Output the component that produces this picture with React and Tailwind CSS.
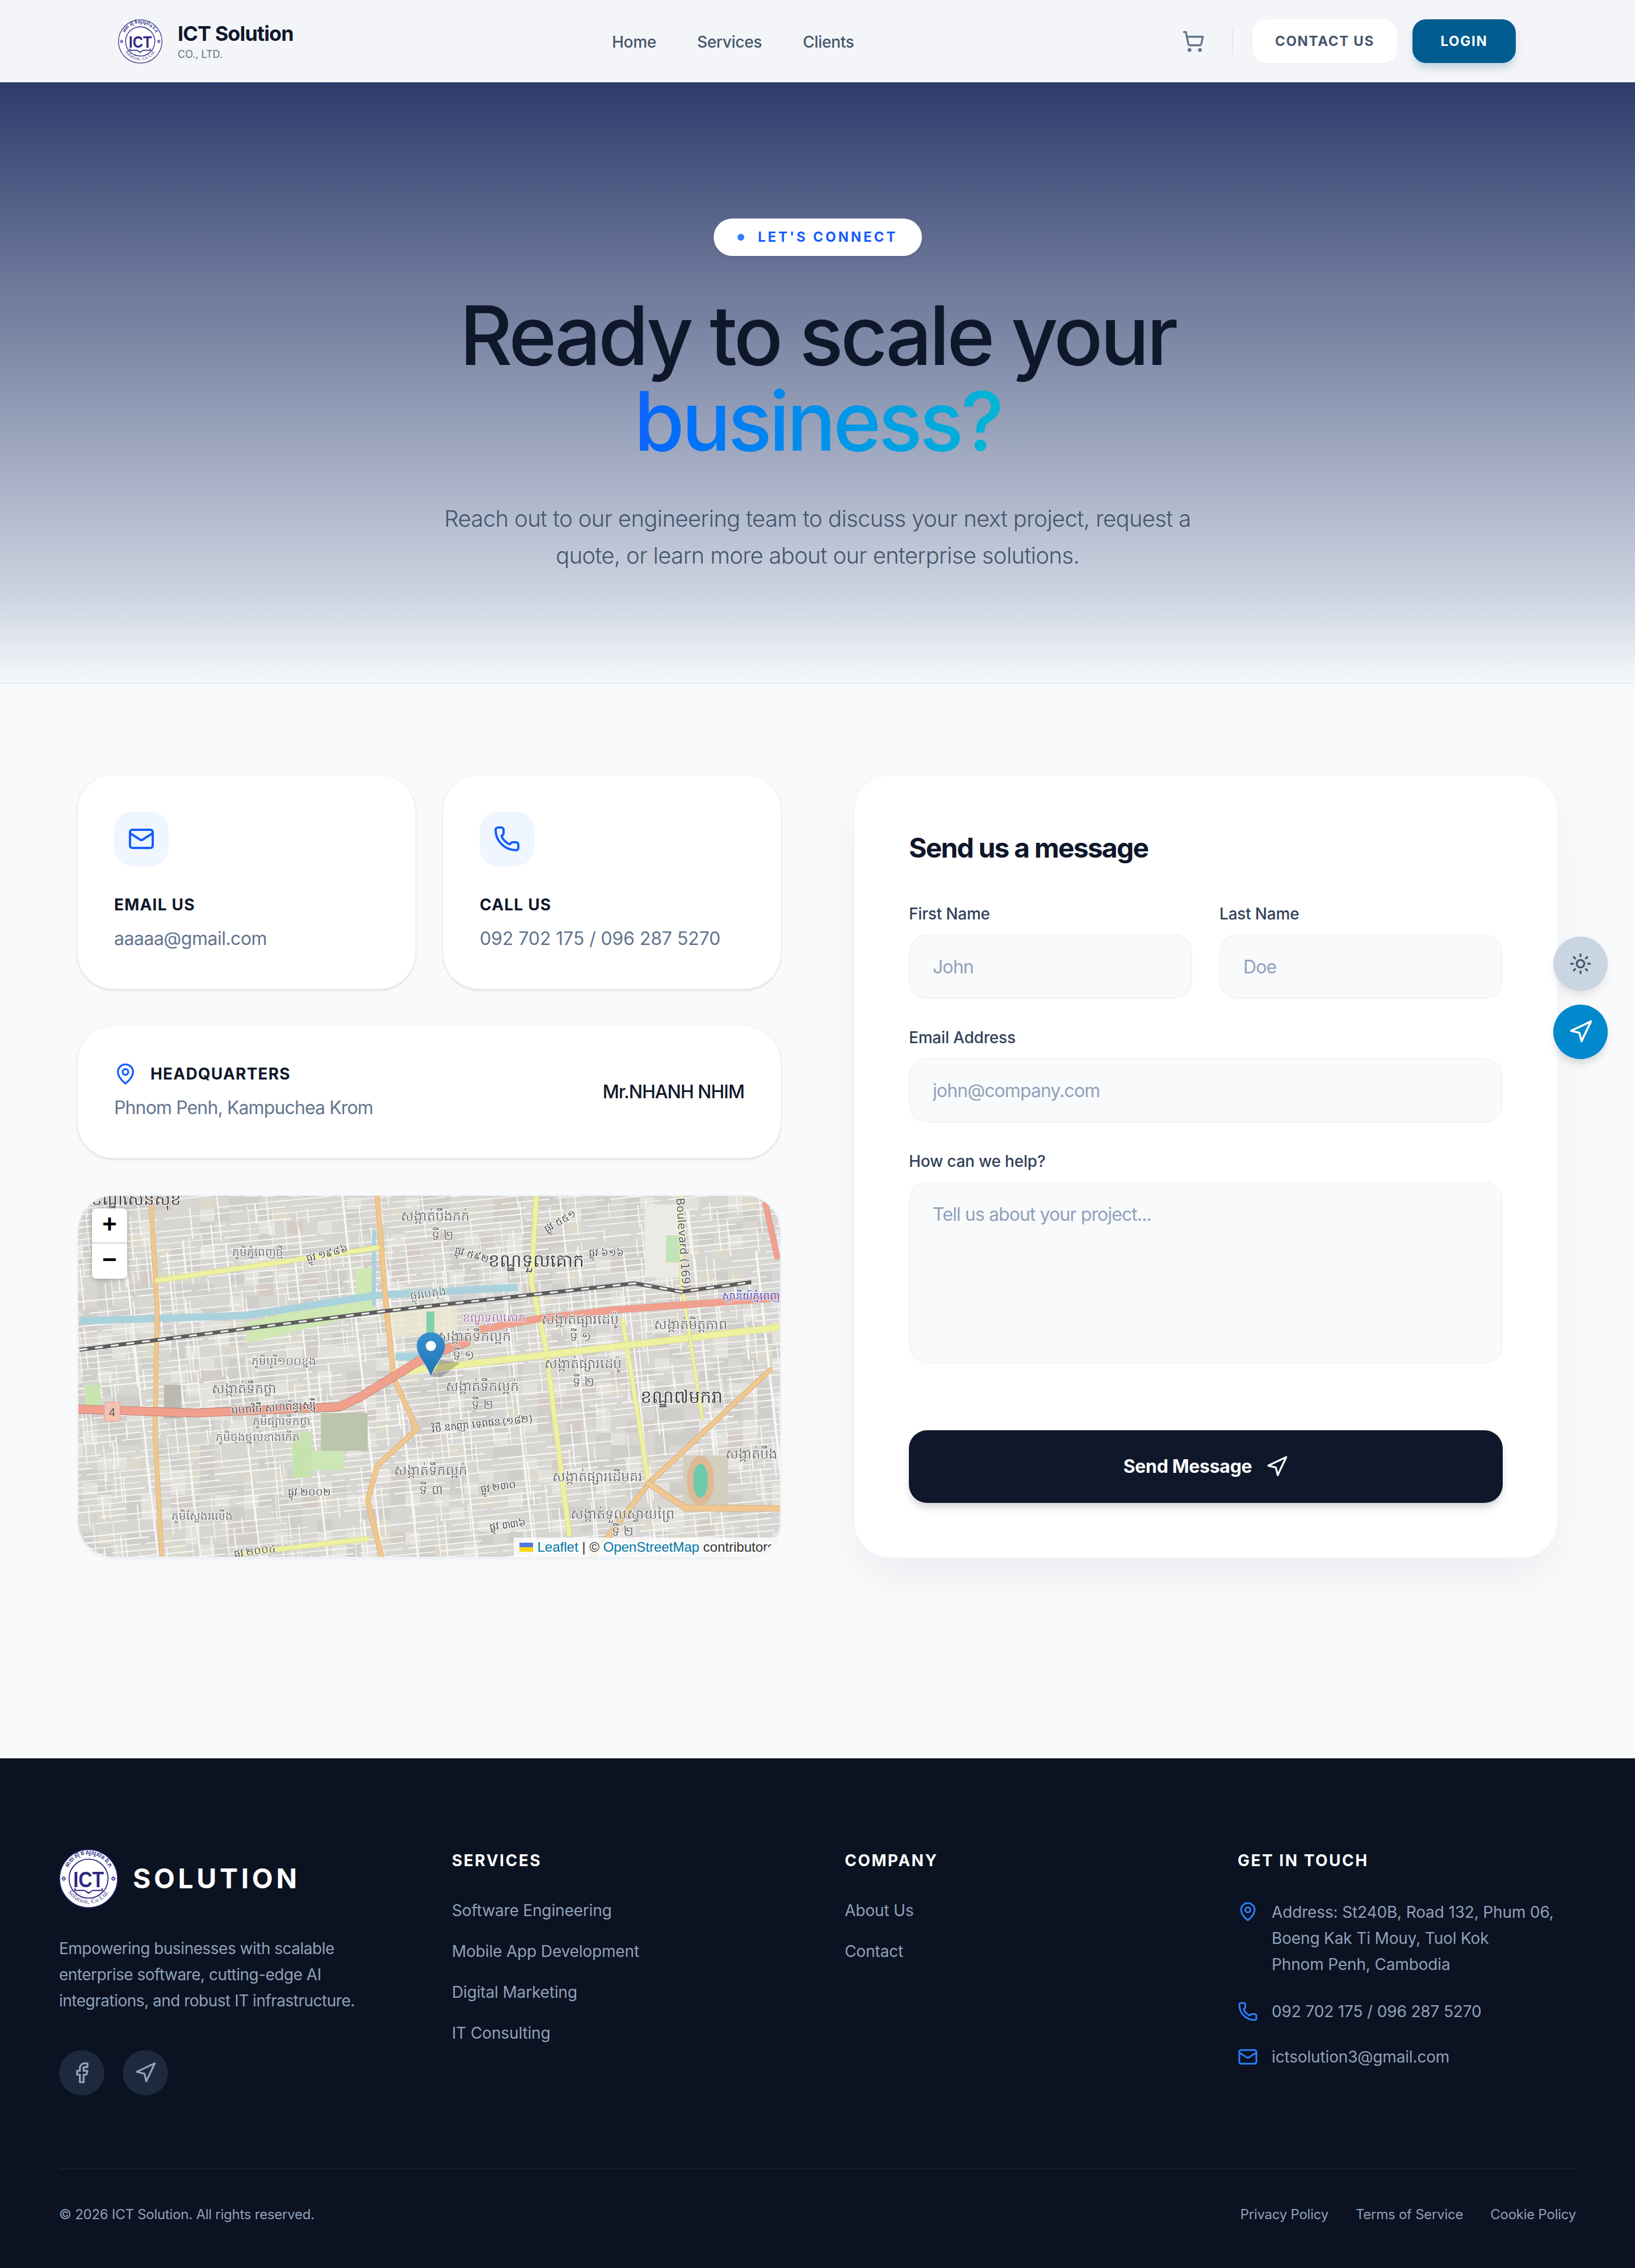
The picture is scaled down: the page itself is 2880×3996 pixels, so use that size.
import React from 'react';
import { Mail, Phone, MapPin, Navigation, Sun, ShoppingCart, Facebook } from 'lucide-react';

const FONT = "font-['Inter','Liberation_Sans',sans-serif]";
const KHMER = "'Noto Sans','DejaVu Sans',sans-serif";

const Logo = ({ className }) => (
  <svg viewBox="0 0 100 100" className={className}>
    <defs>
      <path id="arcTop" d="M13 52 A37.5 37.5 0 1 1 87 52" />
      <path id="arcBottom" d="M10 58 A40.5 40.5 0 0 0 90 58" />
    </defs>
    <circle cx="50" cy="50" r="49" fill="#fff" stroke="#2e2a80" strokeWidth="1.6" />
    <circle cx="50" cy="50" r="33" fill="#fff" stroke="#2e2a80" strokeWidth="1.8" />
    <text fontFamily={KHMER} fontSize="9" fill="#2e2a80" fontWeight="700">
      <textPath href="#arcTop" startOffset="50%" textAnchor="middle">អាយ ស៊ី ធី សូលូសិន ឯ.ក</textPath>
    </text>
    <text fontFamily="'Liberation Serif',serif" fontSize="10.5" fill="#2e2a80" letterSpacing="0.6">
      <textPath href="#arcBottom" startOffset="50%" textAnchor="middle">Solution, Co Ltd.</textPath>
    </text>
    <text x="24" y="64" textLength="52" lengthAdjust="spacingAndGlyphs" fontFamily="'Liberation Sans',sans-serif" fontSize="38" fontWeight="700" fill="#2e2a80">ICT</text>
    <path d="M26 66v5h17l7 5 7-5h17v-5h-2v3H57l-7 4-7-4H28v-3z" fill="#2e2a80" />
    <path d="M5 50l3-3 3 3-3 3zM89 50l3-3 3 3-3 3z" fill="none" stroke="#2e2a80" strokeWidth="1.5" />
  </svg>
);

// tiny seeded generator so the street map stays the same between renders
const rng = (seed) => () => {
  seed = (seed * 16807) % 2147483647;
  return seed / 2147483647;
};

const blocks = (() => {
  const r = rng(77);
  const out = [];
  for (let x = -20; x < 1260; x += 26) {
    for (let y = -20; y < 660; y += 22) {
      const v = r();
      const fill = v < 0.55 ? '#d8d6d2' : v < 0.78 ? '#d0cecb' : v < 0.92 ? '#e4e2dd' : v < 0.97 ? '#dbdacc' : '#d5ccc6';
      out.push({ x, y, fill });
    }
  }
  return out;
})();

const streets = (() => {
  const r = rng(4242);
  const out = [];
  // dense cross streets running slightly uphill
  for (let y = -120; y < 800; y += 11) {
    let x = -60;
    while (x < 1320) {
      const len = 40 + r() * 170;
      if (r() > 0.18) out.push({ x1: x, y1: y + x * -0.1, x2: x + len, y2: y + (x + len) * -0.1, w: 1.3 + r() * 1.2 });
      x += len + 10;
    }
  }
  // short side streets going the other way
  for (let i = 0; i < 420; i++) {
    const x = r() * 1260 - 10;
    const y = r() * 660 - 10;
    const len = 20 + r() * 70;
    out.push({ x1: x, y1: y, x2: x + len * 0.1, y2: y + len, w: 1.2 + r() * 1.2 });
  }
  // a few longer ones
  for (let x = -40; x < 1340; x += 70 + r() * 60) {
    const top = -20 + r() * 300;
    out.push({ x1: x, y1: top, x2: x + (660 - top) * 0.11, y2: 660, w: 2.6 + r() * 1.6 });
  }
  return out;
})();

const Road = ({ d, color, casing, w }) => (
  <g fill="none" strokeLinejoin="round" strokeLinecap="round">
    <path d={d} stroke={casing} strokeWidth={w + 1.6} />
    <path d={d} stroke={color} strokeWidth={w} />
  </g>
);

// [x, y, text, size, rotation, colour]
const labels = [
  [101, 16, 'ខណ្ឌសែនសុខ', 30, 0, '#454545'],
  [631, 44, 'សង្កាត់បឹងកក់', 24, 0],
  [644, 78, 'ទី ២', 24, 0],
  [810, 126, 'ខណ្ឌទួលគោក', 32, 0, '#454545'],
  [316, 107, 'ភូមិភ្នំពេញថ្មី', 20, 0],
  [619, 180, 'ផ្លូវបេតុង', 20, -8],
  [735, 223, 'ខណ្ឌទួលគោក', 21, 0, '#a272a4'],
  [888, 227, 'សង្កាត់ផ្សារដេប៉ូ', 24, 0],
  [888, 258, 'ទី ១', 24, 0],
  [1083, 236, 'សង្កាត់មិត្តភាព', 24, 0],
  [700, 258, 'សង្កាត់ទឹកល្អក់', 24, 0],
  [681, 291, 'ទី ១', 24, 0],
  [893, 306, 'សង្កាត់ផ្សារដេប៉ូ', 24, 0],
  [893, 338, 'ទី ២', 24, 0],
  [714, 346, 'សង្កាត់ទឹកល្អក់', 24, 0],
  [714, 378, 'ទី ២', 24, 0],
  [1067, 367, 'ខណ្ឌ៧មករា', 32, 0, '#454545'],
  [292, 350, 'សង្កាត់ទឹកថ្លា', 24, 0],
  [362, 300, 'ភូមិបូរី១០០ខ្នង', 20, 0],
  [358, 407, 'ភូមិផ្សារទឹកថ្លា', 20, 0],
  [316, 435, 'ភូមិចុងថ្នល់ខាងកើត', 20, 0],
  [345, 382, 'មហាវិថី សហព័ន្ធរុស្ស៊ី', 19, -4, '#454545'],
  [714, 410, 'វិថី ឧកញ៉ា ទេពផន (១៨២)', 18, -6, '#454545'],
  [623, 495, 'សង្កាត់ទឹកល្អក់', 24, 0],
  [623, 529, 'ទី ៣', 24, 0],
  [918, 506, 'សង្កាត់ផ្សារដើមគរ', 24, 0],
  [963, 573, 'សង្កាត់ទួលស្វាយព្រៃ', 24, 0],
  [963, 603, 'ទី ២', 24, 0],
  [1191, 466, 'សង្កាត់បឹង', 24, 0],
  [217, 575, 'ភូមិស្លែងរលើង', 20, 0],
  [1191, 184, 'ស្ថានីយ៍ភ្នំពេញ', 19, 0, '#4646b4'],
  [408, 531, 'ផ្លូវ ២០០២', 18, 0, '#454545'],
  [743, 522, 'ផ្លូវ ២៣០', 18, -8, '#454545'],
  [760, 589, 'ផ្លូវ ៣៣៦', 18, -8, '#454545'],
  [312, 636, 'ផ្លូវ ២០០៤', 18, -8, '#454545'],
  [934, 107, 'ផ្លូវ ៦១៦', 18, 0, '#454545'],
  [694, 110, 'ផ្លូវ ៥៩២', 18, 15, '#454545'],
  [855, 50, 'ផ្លូវ ៥៥១', 18, -30, '#454545'],
  [440, 108, 'ផ្លូវ ១៩៨៦', 18, -14, '#454545'],
];

const MapTiles = () => (
  <svg viewBox="0 0 1240 640" className="block w-full h-full">
    <g style={{ filter: 'blur(0.6px)' }}>
      <rect width="1240" height="640" fill="#d8d6d2" />
      {blocks.map((b, i) => <rect key={i} x={b.x} y={b.y} width="26" height="22" fill={b.fill} />)}
      {streets.map((s, i) => <line key={i} x1={s.x1} y1={s.y1} x2={s.x2} y2={s.y2} stroke="#f8f7f5" strokeWidth={s.w} />)}
      {/* parks and landuse */}
      <path d="M296 225L525 165L525 205L296 262Z" fill="#cfe8b4" />
      <path d="M490 130L525 125L525 190L490 190Z" fill="#cfe8b4" />
      <path d="M428 385H511V452H470V483H428Z" fill="#bcc4ac" />
      <path d="M378 420h34v80h-34z" fill="#c6e3ae" />
      <path d="M412 452h58v35h-58z" fill="#cce6b6" />
      <path d="M1002 15h66v130h-66z" fill="#eceae4" />
      <path d="M1040 70h24v48h-24z" fill="#c3e3b9" />
      <path d="M550 195h120v55h-120z" fill="#ecead0" opacity="0.75" />
      <path d="M615 205h14v38h-14z" fill="#7fd0ab" />
      <path d="M1070 460h80v95h-80z" fill="#d2cfbd" />
      <ellipse cx="1101" cy="505" rx="24" ry="44" fill="#dfb896" />
      <ellipse cx="1101" cy="505" rx="13" ry="30" fill="#6bcbaa" />
      <path d="M150 335h30v60h-30z" fill="#bcbab0" />
      <path d="M10 335h28v50h-28z" fill="#c8e5b0" />
      {/* canal */}
      <path d="M0 222L296 212L528 176L777 162" fill="none" stroke="#a9d2dd" strokeWidth="13" />
      <path d="M522 60V195" fill="none" stroke="#a9d2dd" strokeWidth="7" />
      <path d="M560 292h55v-14h-55z" fill="#a9d2dd" />
      {/* roads */}
      <Road d="M126 0L138 197L134 420L146 640" color="#f0c78e" casing="#dcae74" w={7} />
      <Road d="M528 0L544 197L557 322L598 414L528 478L511 541L536 640" color="#f0c78e" casing="#dcae74" w={8} />
      <Road d="M810 0L801 153L826 264L868 600" color="#eef1a0" casing="#d5d68c" w={8} />
      <Road d="M963 220L1009 510" color="#eef1a0" casing="#d5d68c" w={7} />
      <Road d="M561 313L826 282L1240 233" color="#eef1a0" casing="#d5d68c" w={11} />
      <Road d="M138 150L528 92" color="#eef1a0" casing="#d5d68c" w={8} />
      <Road d="M1067 0L1067 153L1104 394" color="#eef1a0" casing="#d5d68c" w={5} />
      <Road d="M279 635L511 608" color="#eef1a0" casing="#d5d68c" w={8} />
      <Road d="M909 640L1009 510L1224 309" color="#f0c78e" casing="#c9a98a" w={8} />
      <Road d="M1009 510L1075 554L1240 554" color="#f0c78e" casing="#c9a98a" w={10} />
      <Road d="M0 378L204 385L461 374L495 358L561 318L619 282L685 260" color="#f2a08e" casing="#b97464" w={14} />
      <Road d="M710 237L818 217L951 202L1200 184L1240 180" color="#f2a08e" casing="#d8978a" w={11} />
      <Road d="M1216 14L1237 108" color="#f2a08e" casing="#d8978a" w={9} />
      {/* railway */}
      <path d="M0 273L544 204L984 155L1067 170L1191 153" fill="none" stroke="#5c5c5c" strokeWidth="7" />
      <path d="M0 273L544 204L984 155L1067 170L1191 153" fill="none" stroke="#f3f3f3" strokeWidth="3" strokeDasharray="14 14" />
      {/* route shield */}
      <rect x="44" y="366" width="28" height="34" rx="3" fill="#f2c3b4" stroke="#d99f8f" />
      <text x="58" y="390" textAnchor="middle" fontSize="20" fontFamily="'Liberation Sans',sans-serif" fill="#555">4</text>
      <text x="1058" y="4" transform="rotate(86 1058 4)" fontSize="20" fontFamily="'DejaVu Sans',sans-serif" fill="#555" stroke="#fff" strokeWidth="2" paintOrder="stroke">Boulevard (169)</text>
      {labels.map(([x, y, t, s, rot, c], i) => (
        <text key={i} x={x} y={y} textAnchor="middle" fontSize={s} transform={rot ? `rotate(${rot} ${x} ${y})` : undefined} fontFamily={KHMER} fill={c || '#6e6e6e'} stroke="#fff" strokeWidth="2" paintOrder="stroke">{t}</text>
      ))}
    </g>
    {/* leaflet marker */}
    <defs>
      <linearGradient id="pinFill" x1="0" y1="0" x2="0" y2="1">
        <stop offset="0" stopColor="#3a8fd0" />
        <stop offset="1" stopColor="#1f74b5" />
      </linearGradient>
    </defs>
    <path d="M623 320L640 290L675 296L640 322Z" fill="#000" opacity="0.2" />
    <path d="M623 319C614 296 598 282 598 266C598 252 609 242 623 242C637 242 648 252 648 266C648 282 632 296 623 319Z" fill="url(#pinFill)" />
    <circle cx="623" cy="266" r="9" fill="#fff" />
  </svg>
);

const InfoCard = ({ icon: Icon, title, value, valueClass }) => (
  <div className="bg-white rounded-[64px] border border-slate-100 p-16 shadow-[0_2px_4px_rgba(15,23,42,0.12)]">
    <div className="w-24 h-24 rounded-[32px] bg-blue-50 flex items-center justify-center mb-12">
      <Icon size={48} strokeWidth={2} className="text-blue-600" />
    </div>
    <h3 className="text-[28px] leading-10 font-bold text-slate-900 tracking-[1.2px] uppercase mb-4">{title}</h3>
    <p className={`text-[32px] leading-12 text-slate-500 ${valueClass}`}>{value}</p>
  </div>
);

const Field = ({ label, placeholder, className }) => (
  <div className={className}>
    <label className="block text-[28px] leading-10 font-medium text-slate-700 tracking-[-0.2px] mb-4">{label}</label>
    <input placeholder={placeholder} className="block w-full h-[114px] px-10 rounded-[32px] bg-slate-50 border-2 border-slate-100 text-[32px] tracking-[-0.9px] placeholder:text-slate-400 outline-none" />
  </div>
);

const FooterCol = ({ title, links }) => (
  <div>
    <h4 className="text-[28px] leading-10 font-bold text-white tracking-[2.5px] uppercase mb-12">{title}</h4>
    <ul className="flex flex-col gap-8">
      {links.map(l => <li key={l} className="text-[28px] leading-10 text-slate-400 tracking-[-0.15px]">{l}</li>)}
    </ul>
  </div>
);

export default function App() {
  return (
    <div className={`relative w-full bg-slate-50 ${FONT}`}>
      {/* top nav */}
      <header className="h-[145px] bg-[#f3f5f8] flex items-center justify-between pl-[208px] pr-[210px]">
        <div className="flex items-center gap-[27px]">
          <Logo className="w-[78px] h-[78px]" />
          <div className="flex flex-col pt-0.5">
            <span className="text-[36px] leading-[44px] font-bold text-slate-900 tracking-[-0.9px]">ICT Solution</span>
            <span className="text-[18px] leading-[30px] text-gray-500 uppercase">CO., LTD.</span>
          </div>
        </div>
        <nav className="flex items-center gap-[72px] absolute left-[1078px] top-[54px]">
          <a className="text-[28px] leading-10 font-medium text-slate-600 tracking-[-0.3px]">Home</a>
          <a className="text-[28px] leading-10 font-medium text-slate-600 tracking-[-0.3px]">Services</a>
          <a className="text-[28px] leading-10 font-medium text-slate-600 tracking-[-0.3px]">Clients</a>
        </nav>
        <div className="flex items-center">
          <ShoppingCart size={40} strokeWidth={2} className="text-slate-500" />
          <div className="w-0.5 h-12 bg-slate-200 ml-12 mr-[34px]" />
          <button className="w-[255px] h-[77px] rounded-3xl bg-white text-[24px] font-bold text-slate-600 tracking-[1.7px] uppercase shadow-[0_1px_2px_rgba(0,0,0,0.05)]">Contact Us</button>
          <button className="w-[182px] h-[77px] ml-[27px] rounded-3xl bg-[#025c8f] text-[24px] font-bold text-white tracking-[1.7px] uppercase shadow-[0_10px_15px_-3px_rgba(2,92,143,0.25)]">Login</button>
        </div>
      </header>

      {/* hero */}
      <section className="bg-[linear-gradient(180deg,#2e3a6b_0%,#505d85_18%,#8a94b0_50%,#cbd3e0_85%,#f6f8fb_100%)] pt-60 pb-48 border-b-2 border-[#e9eef4] flex flex-col items-center">
        <div className="h-[66px] w-[367px] justify-center rounded-full bg-white flex items-center gap-6 shadow-[0_2px_4px_rgba(15,23,42,0.1)] mb-16">
          <span className="w-3 h-3 rounded-full bg-blue-500" />
          <span className="text-[24px] font-bold text-blue-600 tracking-[3.95px] uppercase">Let's Connect</span>
        </div>
        <h1 className="text-[144px] leading-[151px] font-medium text-slate-900 tracking-[-5px] text-center">
          Ready to scale your<br />
          <span className="bg-gradient-to-r from-[#0f62fe] to-[#06b6d4] bg-clip-text text-transparent">business?</span>
        </h1>
        <p className="mt-16 w-[1400px] text-[40px] leading-[65px] font-light text-slate-600 tracking-[-0.65px] text-center">
          Reach out to our engineering team to discuss your next project, request a quote, or learn more about our enterprise solutions.
        </p>
      </section>

      {/* contact */}
      <main className="w-[2800px] mx-auto px-24 pt-40 pb-[353px] grid grid-cols-2 gap-32">
        <div className="flex flex-col gap-16">
          <div className="grid grid-cols-2 gap-12">
            <InfoCard icon={Mail} title="Email Us" value="aaaaa@gmail.com" valueClass="tracking-[-0.5px]" />
            <InfoCard icon={Phone} title="Call Us" value="092 702 175 / 096 287 5270" valueClass="tracking-[-0.1px]" />
          </div>
          <div className="bg-white rounded-[64px] border border-slate-100 p-16 flex items-center justify-between shadow-[0_2px_4px_rgba(15,23,42,0.12)]">
            <div>
              <div className="flex items-center gap-6 mb-4">
                <MapPin size={40} strokeWidth={2} className="text-blue-600" />
                <h3 className="text-[28px] leading-10 font-bold text-slate-900 tracking-[1.2px] uppercase">Headquarters</h3>
              </div>
              <p className="text-[32px] leading-12 text-slate-500 tracking-[-0.88px]">Phnom Penh, Kampuchea Krom</p>
            </div>
            <p className="text-[32px] leading-12 font-medium text-slate-900 tracking-[-1px]">Mr.NHANH NHIM</p>
          </div>
          <div className="relative h-[640px] rounded-[64px] overflow-hidden border-2 border-slate-100 shadow-[0_2px_4px_rgba(15,23,42,0.06)]">
            <MapTiles />
            <div className="absolute left-[24px] top-[22px] w-[62px] rounded-lg bg-white shadow-[0_1px_8px_rgba(0,0,0,0.3)] font-['Liberation_Mono',monospace] text-[44px] font-bold text-black text-center">
              <div className="h-[62px] leading-[62px] border-b-2 border-slate-300">+</div>
              <div className="h-[62px] leading-[62px]">−</div>
            </div>
            <div className="absolute right-0 bottom-0 h-[34px] pl-2.5 pr-2.5 bg-white/80 flex items-center gap-2 font-['Liberation_Sans',sans-serif] text-[24px] text-[#333] whitespace-nowrap">
              <svg viewBox="0 0 24 16" className="w-6 h-4"><path d="M0 0h24v8H0z" fill="#4c7be1" /><path d="M0 8h24v8H0z" fill="#ffd500" /></svg>
              <span><span className="text-[#0078a8]">Leaflet</span> | © <span className="text-[#0078a8]">OpenStreetMap</span> contributors</span>
            </div>
          </div>
        </div>

        <div className="bg-white rounded-[64px] border border-slate-100 p-24 h-[1380px] shadow-[0_40px_80px_-10px_rgba(15,23,42,0.06)]">
          <h2 className="text-[48px] leading-16 font-bold text-slate-900 tracking-[-1.8px] mb-16">Send us a message</h2>
          <div className="grid grid-cols-2 gap-12 mb-12">
            <Field label="First Name" placeholder="John" />
            <Field label="Last Name" placeholder="Doe" />
          </div>
          <Field label="Email Address" placeholder="john@company.com" className="mb-12" />
          <label className="block text-[28px] leading-10 font-medium text-slate-700 tracking-[-0.2px] mb-4">How can we help?</label>
          <textarea placeholder="Tell us about your project..." className="block w-full h-[320px] px-10 py-8 rounded-[32px] bg-slate-50 border-2 border-slate-100 text-[32px] leading-12 tracking-[-0.9px] placeholder:text-slate-400 outline-none resize-none" />
          <button className="mt-[118px] w-full h-[128px] rounded-[32px] bg-slate-900 text-white text-[32px] font-bold tracking-[-0.3px] flex items-center justify-center gap-6 shadow-[0_10px_15px_-3px_rgba(15,23,42,0.2)]">
            Send Message
            <Navigation size={40} strokeWidth={2} />
          </button>
        </div>
      </main>

      {/* floating buttons */}
      <div className="absolute right-12 top-[1650px] flex flex-col gap-6">
        <button className="w-24 h-24 rounded-full bg-slate-300 flex items-center justify-center text-slate-600 shadow-[0_10px_15px_-3px_rgba(0,0,0,0.1)]"><Sun size={40} strokeWidth={2} /></button>
        <button className="w-24 h-24 rounded-full bg-[#0288cc] flex items-center justify-center text-white shadow-[0_10px_15px_-3px_rgba(0,0,0,0.15)]"><Navigation size={44} strokeWidth={2} /></button>
      </div>

      {/* footer */}
      <footer className="bg-[#0b1221] px-[104px] pt-40 pb-20">
        <div className="grid grid-cols-4 gap-24 pb-32 border-b-2 border-[#172032]">
          <div>
            <div className="flex items-center gap-[26px] mb-12">
              <Logo className="w-[104px] h-[104px]" />
              <span className="text-[48px] leading-none font-bold text-white tracking-[5.6px]">SOLUTION</span>
            </div>
            <p className="text-[28px] leading-[46px] text-slate-400 tracking-[-0.5px] w-[560px] mb-16">Empowering businesses with scalable enterprise software, cutting-edge AI integrations, and robust IT infrastructure.</p>
            <div className="flex gap-8">
              <span className="w-20 h-20 rounded-full bg-slate-800 flex items-center justify-center text-slate-400"><Facebook size={40} strokeWidth={2} /></span>
              <span className="w-20 h-20 rounded-full bg-slate-800 flex items-center justify-center text-slate-400"><Navigation size={40} strokeWidth={2} /></span>
            </div>
          </div>
          <FooterCol title="Services" links={['Software Engineering', 'Mobile App Development', 'Digital Marketing', 'IT Consulting']} />
          <FooterCol title="Company" links={['About Us', 'Contact']} />
          <div>
            <h4 className="text-[28px] leading-10 font-bold text-white tracking-[2.5px] uppercase mb-12">Get in Touch</h4>
            <div className="flex flex-col gap-10 text-[28px] text-slate-400 tracking-[-0.15px]">
              <div className="flex gap-6">
                <MapPin size={36} strokeWidth={2} className="text-blue-500 shrink-0 mt-1" />
                <p className="leading-[46px]">Address: St240B, Road 132, Phum 06,<br />Boeng Kak Ti Mouy, Tuol Kok<br />Phnom Penh, Cambodia</p>
              </div>
              <div className="flex gap-6 items-center leading-10">
                <Phone size={36} strokeWidth={2} className="text-blue-500 shrink-0" />
                <p>092 702 175 / 096 287 5270</p>
              </div>
              <div className="flex gap-6 items-center leading-10">
                <Mail size={36} strokeWidth={2} className="text-blue-500 shrink-0" />
                <p>ictsolution3@gmail.com</p>
              </div>
            </div>
          </div>
        </div>
        <div className="flex items-center justify-between pt-16 text-[24px] leading-8 text-slate-400 tracking-[-0.25px]">
          <p>© 2026 ICT Solution. All rights reserved.</p>
          <div className="flex gap-12">
            <a>Privacy Policy</a>
            <a>Terms of Service</a>
            <a>Cookie Policy</a>
          </div>
        </div>
      </footer>
    </div>
  );
}
